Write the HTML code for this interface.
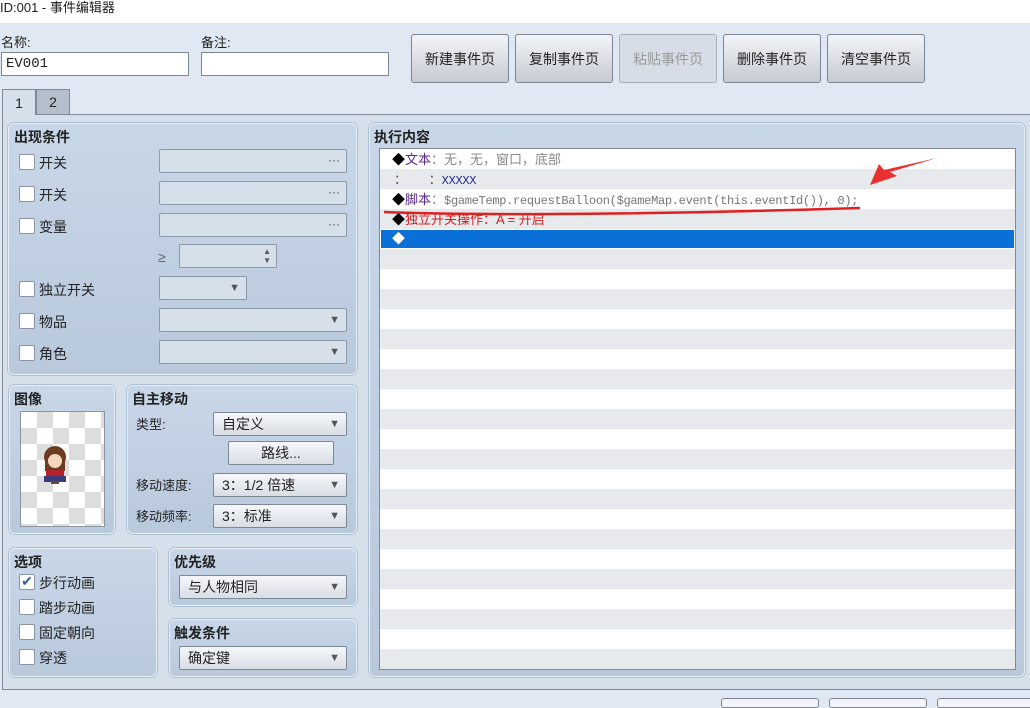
<!DOCTYPE html>
<html><head><meta charset="utf-8"><style>
*{box-sizing:border-box;margin:0;padding:0}
body{width:1030px;height:703px;overflow:hidden;background:#dfe8f3;font-family:"Liberation Sans","Noto Sans CJK SC",sans-serif;font-size:14px;line-height:16px;color:#222;position:relative}
.a{position:absolute}
.title{left:0;top:0;width:1030px;height:23px;background:#fff;font-size:13px;line-height:16px}
.inp{background:#fff;border:1px solid #7a8796;height:24px;font-size:14px;line-height:22px;padding-left:4px;font-family:"Liberation Mono",monospace}
.btn{border:1px solid #7c8591;border-radius:3px;background:linear-gradient(#f3f5f8,#d7dbe1 60%,#c6cbd2);text-align:center;font-size:14px;color:#222;line-height:48px}
.panel{border-radius:6px;background:linear-gradient(#c8d7e8,#b9c9dc);border:1px solid #e8eef6;box-shadow:0 0 0 1px #aebfd3}
.h{font-weight:bold;font-size:14px}
.cb{width:16px;height:16px;background:#fff;border:1px solid #8a94a2;border-radius:2px}
.fld{border:1px solid #8d99a8;border-radius:2px;background:#d6e0ea;height:24px}
.dd{border:1px solid #7d8897;border-radius:2px;background:linear-gradient(#f5f7fa,#d9dee5);height:24px;line-height:23px;padding-left:8px;font-size:14px}
.arr{position:absolute;right:6px;top:0;font-size:11px;color:#555;line-height:22px}
.dots{position:absolute;right:6px;top:5px;font-size:12px;color:#444;line-height:10px}
.row{position:absolute;left:0;width:635px;height:20px;font-size:13px;line-height:20px;white-space:nowrap}
.mono{font-family:"Liberation Mono",monospace;font-size:12px;letter-spacing:-0.3px;color:#777}
.lb{line-height:16px}
</style></head><body>
<div class="a title">ID:001 - 事件编辑器</div>

<div class="a" style="left:1px;top:35px;font-size:13px">名称:</div>
<div class="a inp" style="left:1px;top:52px;width:188px">EV001</div>
<div class="a" style="left:201px;top:35px;font-size:13px">备注:</div>
<div class="a inp" style="left:201px;top:52px;width:188px"></div>

<div class="a btn" style="left:411px;top:34px;width:98px;height:49px">新建事件页</div>
<div class="a btn" style="left:515px;top:34px;width:98px;height:49px">复制事件页</div>
<div class="a btn" style="left:619px;top:34px;width:98px;height:49px;color:#999;background:#d6dde6;border-color:#a3acb7">粘贴事件页</div>
<div class="a btn" style="left:723px;top:34px;width:98px;height:49px">删除事件页</div>
<div class="a btn" style="left:827px;top:34px;width:98px;height:49px">清空事件页</div>

<div class="a" style="left:2px;top:114px;width:1028px;height:576px;border-top:1px solid #7f8a96;border-left:1px solid #7f8a96;border-bottom:1px solid #7f8a96;background:#d6e0eb"></div>
<div class="a" style="left:2px;top:89px;width:34px;height:26px;background:#d6e0eb;border:1px solid #7f8a96;border-bottom:none;text-align:center;line-height:26px;font-size:14px">1</div>
<div class="a" style="left:36px;top:89px;width:34px;height:25px;background:#b4bfcb;border:1px solid #7f8a96;border-bottom:none;text-align:center;line-height:25px;font-size:14px">2</div>

<div class="a panel" style="left:8px;top:123px;width:349px;height:252px"></div>
<div class="a h" style="left:14px;top:129px">出现条件</div>
<div class="a cb" style="left:19px;top:154px"></div><div class="a lb" style="left:39px;top:155px">开关</div>
<div class="a fld" style="left:159px;top:149px;width:188px"><span class="dots">···</span></div>
<div class="a cb" style="left:19px;top:186px"></div><div class="a lb" style="left:39px;top:187px">开关</div>
<div class="a fld" style="left:159px;top:181px;width:188px"><span class="dots">···</span></div>
<div class="a cb" style="left:19px;top:218px"></div><div class="a lb" style="left:39px;top:219px">变量</div>
<div class="a fld" style="left:159px;top:213px;width:188px"><span class="dots">···</span></div>
<div class="a" style="left:158px;top:249px;color:#666">≥</div>
<div class="a fld" style="left:179px;top:244px;width:98px"><span style="position:absolute;right:5px;top:2px;font-size:8px;line-height:9px;color:#555">▲<br>▼</span></div>
<div class="a cb" style="left:19px;top:281px"></div><div class="a lb" style="left:39px;top:282px">独立开关</div>
<div class="a fld" style="left:159px;top:276px;width:88px"><span class="arr">▼</span></div>
<div class="a cb" style="left:19px;top:313px"></div><div class="a lb" style="left:39px;top:314px">物品</div>
<div class="a fld" style="left:159px;top:308px;width:188px"><span class="arr">▼</span></div>
<div class="a cb" style="left:19px;top:345px"></div><div class="a lb" style="left:39px;top:346px">角色</div>
<div class="a fld" style="left:159px;top:340px;width:188px"><span class="arr">▼</span></div>

<div class="a panel" style="left:9px;top:385px;width:106px;height:149px"></div>
<div class="a h" style="left:14px;top:391px">图像</div>
<div class="a" style="left:20px;top:411px;width:85px;height:116px;border:1px solid #8a94a2;background-color:#fff;background-image:linear-gradient(45deg,#ddd 25%,transparent 25%,transparent 75%,#ddd 75%),linear-gradient(45deg,#ddd 25%,transparent 25%,transparent 75%,#ddd 75%);background-size:32px 32px;background-position:0 0,16px 16px"></div>
<svg class="a" style="left:40px;top:445px" width="30" height="40" viewBox="0 0 30 40">
<ellipse cx="15" cy="12" rx="11" ry="11" fill="#6b3b22"/>
<rect x="5" y="12" width="20" height="14" fill="#6b3b22"/>
<ellipse cx="15" cy="16" rx="7" ry="7" fill="#f6d6bd"/>
<rect x="6" y="25" width="18" height="8" fill="#b5212a"/>
<rect x="4" y="31" width="22" height="6" fill="#3a3c7a"/>
<rect x="11" y="36" width="8" height="3" fill="#6b4a2a"/>
</svg>

<div class="a panel" style="left:127px;top:385px;width:230px;height:149px"></div>
<div class="a h" style="left:132px;top:391px">自主移动</div>
<div class="a" style="left:136px;top:417px;font-size:13px">类型:</div>
<div class="a dd" style="left:213px;top:412px;width:134px">自定义<span class="arr">▼</span></div>
<div class="a dd" style="left:228px;top:441px;width:106px;text-align:center;padding-left:0">路线...</div>
<div class="a" style="left:136px;top:478px;font-size:13px">移动速度:</div>
<div class="a dd" style="left:213px;top:473px;width:134px">3：1/2 倍速<span class="arr">▼</span></div>
<div class="a" style="left:136px;top:509px;font-size:13px">移动频率:</div>
<div class="a dd" style="left:213px;top:504px;width:134px">3：标准<span class="arr">▼</span></div>

<div class="a panel" style="left:9px;top:548px;width:148px;height:129px"></div>
<div class="a h" style="left:14px;top:554px">选项</div>
<div class="a cb" style="left:19px;top:574px;color:#3a5a9a;font-size:14px;line-height:13px;text-align:center">✔</div><div class="a lb" style="left:39px;top:575px">步行动画</div>
<div class="a cb" style="left:19px;top:599px"></div><div class="a lb" style="left:39px;top:600px">踏步动画</div>
<div class="a cb" style="left:19px;top:624px"></div><div class="a lb" style="left:39px;top:625px">固定朝向</div>
<div class="a cb" style="left:19px;top:649px"></div><div class="a lb" style="left:39px;top:650px">穿透</div>

<div class="a panel" style="left:169px;top:548px;width:188px;height:58px"></div>
<div class="a h" style="left:174px;top:554px">优先级</div>
<div class="a dd" style="left:179px;top:575px;width:168px">与人物相同<span class="arr">▼</span></div>
<div class="a panel" style="left:169px;top:619px;width:188px;height:58px"></div>
<div class="a h" style="left:174px;top:625px">触发条件</div>
<div class="a dd" style="left:179px;top:646px;width:168px">确定键<span class="arr">▼</span></div>

<div class="a panel" style="left:369px;top:123px;width:656px;height:554px"></div>
<div class="a h" style="left:374px;top:129px">执行内容</div>
<div class="a" style="left:379px;top:148px;width:637px;height:522px;border:1px solid #7f8a96;background:repeating-linear-gradient(#fff 0 20px,#e6eaed 20px 40px);overflow:hidden">
 <div class="row" style="top:1px;padding-left:12px"><span style="color:#000">◆</span><span style="color:#5a2a8a">文本</span><span style="color:#888">：无，无，窗口，底部</span></div>
 <div class="row" style="top:21px;padding-left:14px;color:#555">：&nbsp;&nbsp;&nbsp;&nbsp;&nbsp;&nbsp;：<span class="mono" style="color:#2a2a8a">XXXXX</span></div>
 <div class="row" style="top:41px;padding-left:12px"><span style="color:#000">◆</span><span style="color:#5a2a8a">脚本</span><span style="color:#888">：</span><span class="mono">$gameTemp.requestBalloon($gameMap.event(this.eventId()), 0);</span></div>
 <div class="row" style="top:61px;padding-left:12px"><span style="color:#000">◆</span><span style="color:#d02020">独立开关操作：A = 开启</span></div>
 <div class="row" style="top:81px;height:18px;left:1px;width:633px;background:#0a6fd6;padding-left:11px;color:#fff;line-height:18px">◆</div>
</div>
<svg class="a" style="left:370px;top:150px" width="580" height="70" viewBox="0 0 580 70">
<path d="M14 62 C120 66 300 64 490 58" stroke="#e02020" stroke-width="2.5" fill="none"/>
<path d="M567 8 L520 22 L527 26 L500 35 L509 14 L514 20 Z" fill="#e83030"/>
</svg>

<div class="a" style="left:721px;top:698px;width:98px;height:10px;border:1px solid #7c8591;border-radius:3px;background:#f3f5f8"></div>
<div class="a" style="left:829px;top:698px;width:98px;height:10px;border:1px solid #7c8591;border-radius:3px;background:#f3f5f8"></div>
<div class="a" style="left:937px;top:698px;width:98px;height:10px;border:1px solid #7c8591;border-radius:3px;background:#f3f5f8"></div>
</body></html>
